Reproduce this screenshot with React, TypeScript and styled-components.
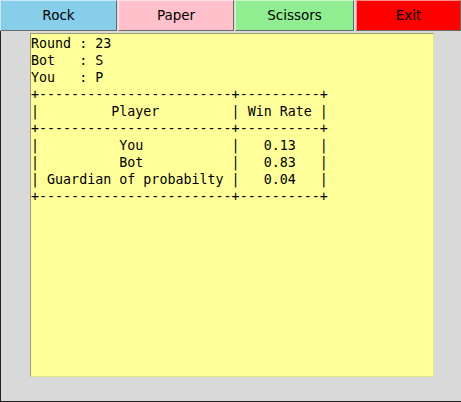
import React from "react";
import styled, { createGlobalStyle } from "styled-components";

const Global = createGlobalStyle`
  html, body { margin: 0; padding: 0; background: #d9d9d9; }
  #root { width: 461px; height: 402px; }
`;

const Window = styled.div`
  width: 461px;
  height: 402px;
  display: flex;
  flex-direction: column;
  background: #d9d9d9;
  overflow: hidden;
`;

const Toolbar = styled.div`
  display: flex;
  height: 31px;
  flex: none;
`;

const Btn = styled.button<{ $bg: string; $w: number; $gap: number }>`
  box-sizing: border-box;
  width: ${(p) => p.$w}px;
  margin-right: ${(p) => p.$gap}px;
  height: 31px;
  flex: none;
  padding: 0;
  background: ${(p) => p.$bg};
  border: 1px solid;
  border-color: rgba(255, 255, 255, 0.55) #6a6a6a #6a6a6a rgba(255, 255, 255, 0.55);
  font-family: "DejaVu Sans", sans-serif;
  font-size: 13.5px;
  color: #000;
  line-height: 29px;
  text-align: center;
`;

const Body = styled.div`
  flex: 1;
  box-sizing: border-box;
  border-left: 1px solid #222;
  border-bottom: 1px solid #222;
  padding: 2px 0 0 29px;
`;

const TextArea = styled.pre`
  box-sizing: border-box;
  margin: 0;
  width: 404px;
  height: 344px;
  background: #ffff99;
  border: 1px solid;
  border-color: #9c9c6c #e4e48c #e4e48c #9c9c6c;
  padding: 1px 0 0 0;
  font-family: "DejaVu Sans Mono", monospace;
  font-size: 13.33px;
  line-height: 17px;
  color: #000;
  white-space: pre;
`;

const lines = [
  "Round : 23",
  "Bot   : S",
  "You   : P",
  "+------------------------+----------+",
  "|         Player         | Win Rate |",
  "+------------------------+----------+",
  "|          You           |   0.13   |",
  "|          Bot           |   0.83   |",
  "| Guardian of probabilty |   0.04   |",
  "+------------------------+----------+",
];

const buttons = [
  { label: "Rock", bg: "#87ceeb", w: 117, gap: 1 },
  { label: "Paper", bg: "#ffc0cb", w: 116, gap: 1 },
  { label: "Scissors", bg: "#90ee90", w: 119, gap: 2 },
  { label: "Exit", bg: "#ff0000", w: 105, gap: 0 },
];

export default function App() {
  return (
    <>
      <Global />
      <Window>
        <Toolbar>
          {buttons.map((b) => (
            <Btn key={b.label} $bg={b.bg} $w={b.w} $gap={b.gap}>
              {b.label}
            </Btn>
          ))}
        </Toolbar>
        <Body>
          <TextArea>{lines.join("\n")}</TextArea>
        </Body>
      </Window>
    </>
  );
}
